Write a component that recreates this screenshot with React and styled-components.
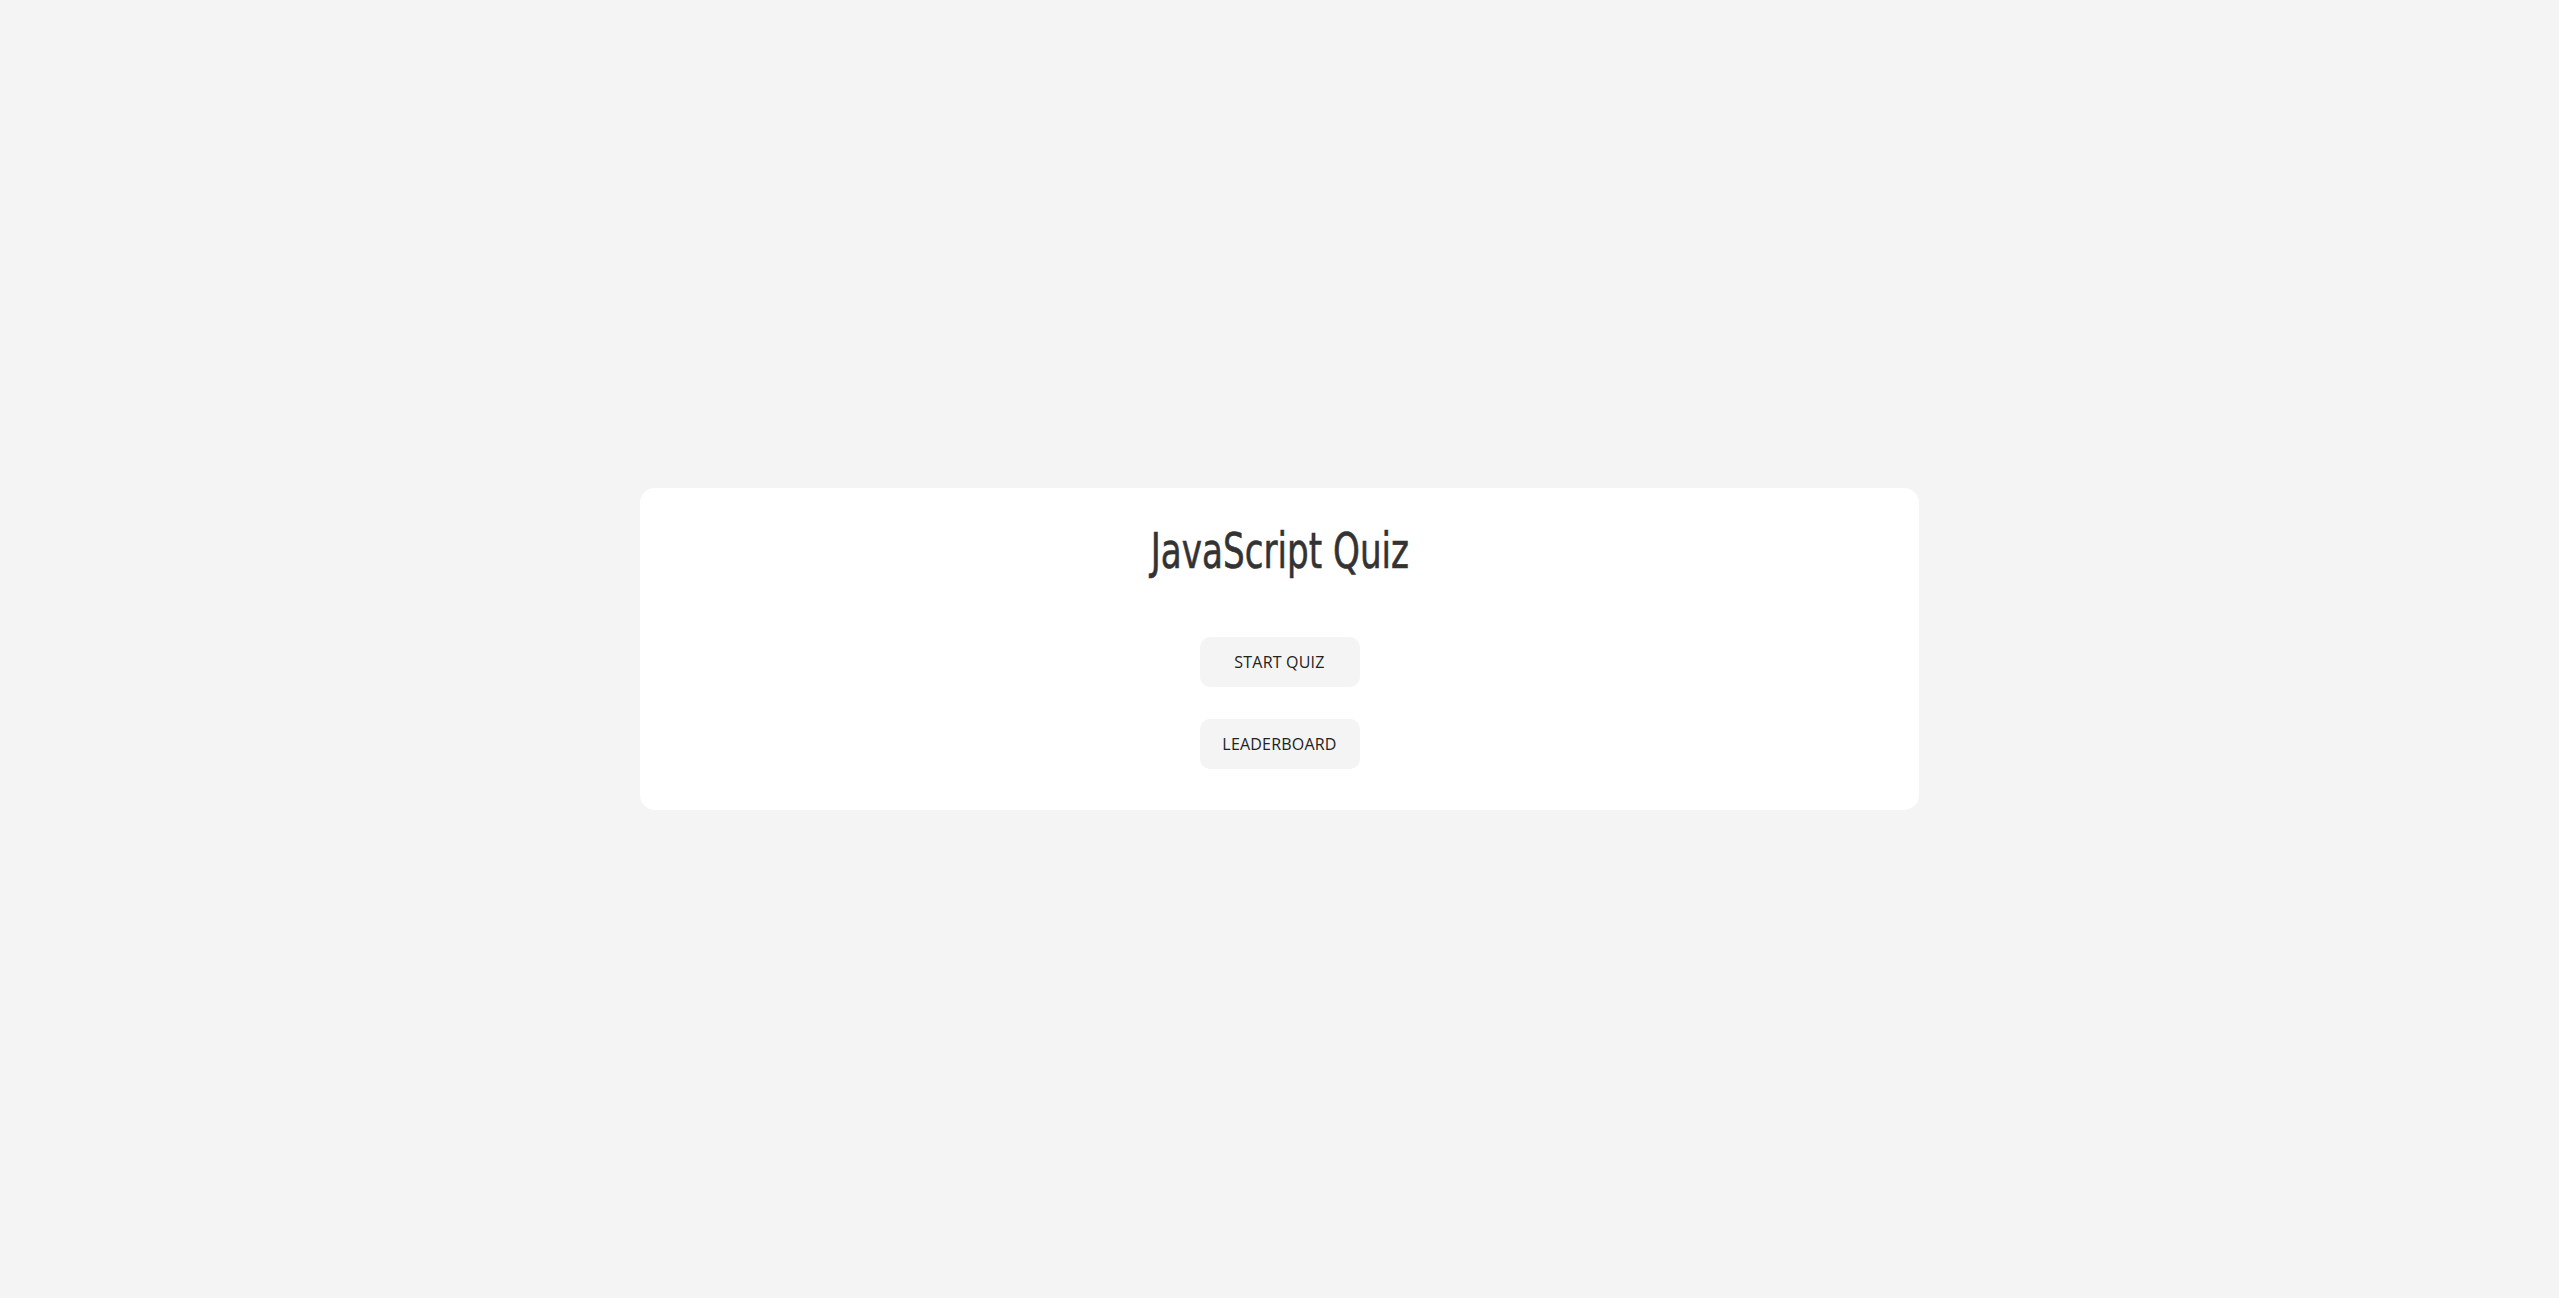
import React from "react";
import styled, { createGlobalStyle } from "styled-components";

const GlobalStyle = createGlobalStyle`
  html, body {
    margin: 0;
    padding: 0;
    background: #f4f4f4;
  }
  * { box-sizing: border-box; }
`;

const Page = styled.main`
  min-height: 100vh;
  display: flex;
  align-items: center;
  justify-content: center;
  background: #f4f4f4;
`;

const Card = styled.section`
  width: 50%;
  background: #ffffff;
  border-radius: 15px;
  padding: 38px 24px 41px;
  display: flex;
  flex-direction: column;
  align-items: center;
`;

const Title = styled.h1`
  margin: 0 0 61px;
  font-family: "DejaVu Sans Condensed", "Liberation Sans", sans-serif;
  font-weight: 400;
  font-size: 50px;
  line-height: 1;
  color: #333333;
  -webkit-text-stroke: 0.6px #333333;
  display: inline-block;
  transform: scaleX(0.76);
`;

const Actions = styled.div`
  display: flex;
  flex-direction: column;
  align-items: center;
  gap: 32px;
`;

const Button = styled.button`
  width: 160px;
  height: 50px;
  border: none;
  border-radius: 10px;
  background: #f4f4f4;
  color: #222222;
  font-family: "Open Sans", "Liberation Sans", sans-serif;
  font-size: 16px;
  letter-spacing: 0.2px;
  font-weight: 400;
  text-transform: uppercase;
  cursor: pointer;
  padding: 0;
`;

export default function App() {
  return (
    <>
      <GlobalStyle />
      <Page>
        <Card>
          <Title>JavaScript Quiz</Title>
          <Actions>
            <Button>Start Quiz</Button>
            <Button>Leaderboard</Button>
          </Actions>
        </Card>
      </Page>
    </>
  );
}
